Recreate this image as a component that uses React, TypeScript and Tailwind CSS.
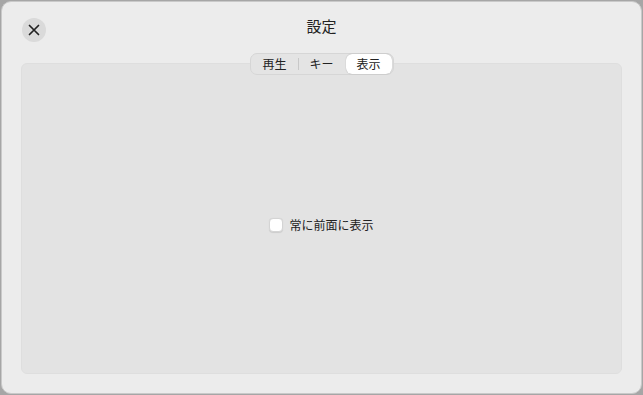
import { useState } from 'react'

const tabs = ['再生', 'キー', '表示']

export default function App() {
  const [active, setActive] = useState(2)
  const [onTop, setOnTop] = useState(false)

  return (
    <div
      className="w-[643px] h-[395px] bg-[#a6a6a6] p-[1px]"
      style={{ fontFamily: '"Noto Sans CJK JP", "Noto Sans", sans-serif' }}
    >
      <div className="w-full h-full bg-[#ececec] rounded-[10px] border border-[#c9c9c9] flex flex-col overflow-hidden">
        {/* Title bar */}
        <div className="relative h-[51px] flex items-start justify-center shrink-0">
          <button className="absolute left-[20px] top-[16px] w-[24px] h-[24px] rounded-full bg-[#dadada] flex items-center justify-center">
            <svg width="12" height="12" viewBox="0 0 12 12">
              <path d="M1.5 1.5 L10.5 10.5 M10.5 1.5 L1.5 10.5" stroke="#222" strokeWidth="1.7" strokeLinecap="round" />
            </svg>
          </button>
          <h1 className="mt-[14px] text-[15px] leading-[20px] text-[#222]">設定</h1>
        </div>

        {/* Tab view */}
        <div className="flex-1 flex flex-col px-[19px] pb-[19px]">
          <div className="relative z-10 self-center flex items-center h-[22px] p-[1px] rounded-[7px] bg-[#e4e4e4] border border-[#d6d6d6]">
            {tabs.map((t, i) => (
              <div key={t} className="flex items-center">
                {i > 0 && (
                  <div
                    className={`w-px h-[12px] ${
                      active === i || active === i - 1 ? 'bg-transparent' : 'bg-[#c8c8c8]'
                    }`}
                  />
                )}
                <button
                  onClick={() => setActive(i)}
                  className={`w-[46px] h-[20px] rounded-[6px] text-[12px] leading-[20px] text-[#222] ${
                    active === i ? 'bg-white shadow-[0_0_1px_rgba(0,0,0,0.35)]' : ''
                  }`}
                >
                  {t}
                </button>
              </div>
            ))}
          </div>
          <div className="-mt-[12px] flex-1 rounded-[6px] bg-[#e3e3e3] border border-[#dedede] pt-[12px] flex items-center justify-center">
            <label className="flex items-center gap-[6px] cursor-pointer">
              <button
                onClick={() => setOnTop(!onTop)}
                className="w-[14px] h-[14px] rounded-[4px] bg-white border border-[#d4d4d4] shadow-[0_0.5px_1px_rgba(0,0,0,0.1)]"
              />
              <span className="text-[12px] leading-[18px] text-[#222]">常に前面に表示</span>
            </label>
          </div>
        </div>
      </div>
    </div>
  )
}
